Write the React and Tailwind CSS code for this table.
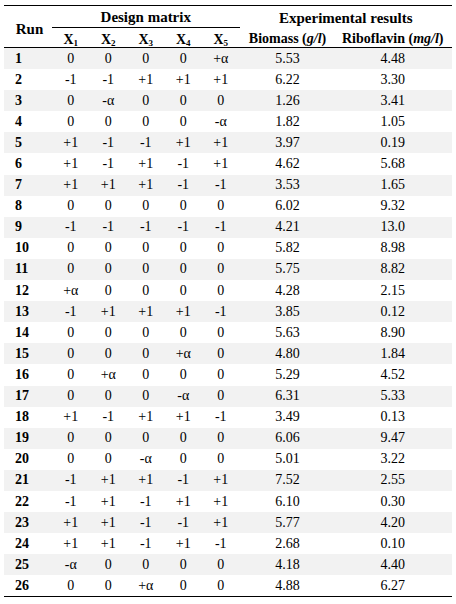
const rows = [
  ["1", "0", "0", "0", "0", "+α", "5.53", "4.48"],
  ["2", "-1", "-1", "+1", "+1", "+1", "6.22", "3.30"],
  ["3", "0", "-α", "0", "0", "0", "1.26", "3.41"],
  ["4", "0", "0", "0", "0", "-α", "1.82", "1.05"],
  ["5", "+1", "-1", "-1", "+1", "+1", "3.97", "0.19"],
  ["6", "+1", "-1", "+1", "-1", "+1", "4.62", "5.68"],
  ["7", "+1", "+1", "+1", "-1", "-1", "3.53", "1.65"],
  ["8", "0", "0", "0", "0", "0", "6.02", "9.32"],
  ["9", "-1", "-1", "-1", "-1", "-1", "4.21", "13.0"],
  ["10", "0", "0", "0", "0", "0", "5.82", "8.98"],
  ["11", "0", "0", "0", "0", "0", "5.75", "8.82"],
  ["12", "+α", "0", "0", "0", "0", "4.28", "2.15"],
  ["13", "-1", "+1", "+1", "+1", "-1", "3.85", "0.12"],
  ["14", "0", "0", "0", "0", "0", "5.63", "8.90"],
  ["15", "0", "0", "0", "+α", "0", "4.80", "1.84"],
  ["16", "0", "+α", "0", "0", "0", "5.29", "4.52"],
  ["17", "0", "0", "0", "-α", "0", "6.31", "5.33"],
  ["18", "+1", "-1", "+1", "+1", "-1", "3.49", "0.13"],
  ["19", "0", "0", "0", "0", "0", "6.06", "9.47"],
  ["20", "0", "0", "-α", "0", "0", "5.01", "3.22"],
  ["21", "-1", "+1", "+1", "-1", "+1", "7.52", "2.55"],
  ["22", "-1", "+1", "-1", "+1", "+1", "6.10", "0.30"],
  ["23", "+1", "+1", "-1", "-1", "+1", "5.77", "4.20"],
  ["24", "+1", "+1", "-1", "+1", "-1", "2.68", "0.10"],
  ["25", "-α", "0", "0", "0", "0", "4.18", "4.40"],
  ["26", "0", "0", "+α", "0", "0", "4.88", "6.27"],
]

const cols = "grid grid-cols-[48px_repeat(5,37.5px)_96px_1fr]"

const X = ({ n }) => (
  <span>
    X<sub className="text-[9px]">{n}</sub>
  </span>
)

export default function App() {
  return (
    <div className="w-[456px] h-[604px] bg-white text-black font-['Liberation_Serif',serif] text-[14px] leading-none">
      <div className="ml-[4px] w-[448px] pt-[5px]">
        <div className="border-t-[1.5px] border-black" />

        {/* header */}
        <div className={`${cols} grid-rows-[22px_19px] font-bold text-[15px]`}>
          <div className="row-span-2 flex items-center justify-center pl-[3px] pt-[6px]">Run</div>
          <div className="col-span-5 flex items-center justify-center pt-[2px] border-b border-black">Design matrix</div>
          <div className="col-span-2 flex items-center justify-center pt-[2px]">Experimental results</div>
          {[1, 2, 3, 4, 5].map((n) => (
            <div key={n} className="flex items-center justify-center pt-[4px] text-[14px]">
              <X n={n} />
            </div>
          ))}
          <div className="flex items-center justify-center whitespace-nowrap pt-[3px] text-[14px]">
            Biomass&nbsp;(<i>g/l</i>)
          </div>
          <div className="flex items-center justify-center whitespace-nowrap pt-[3px] pr-[2px] text-[14px]">
            Riboflavin&nbsp;(<i>mg/l</i>)
          </div>
        </div>

        <div className="border-t-[1.5px] border-black" />

        {/* body */}
        {rows.map((r, i) => (
          <div key={r[0]} className={`${cols} h-[21.1px] items-center ${i % 2 === 0 ? "bg-[#f2f2f2]" : ""}`}>
            <div className="pl-[11px] font-bold">{r[0]}</div>
            {r.slice(1, 6).map((v, j) => (
              <div key={j} className="text-center">{v}</div>
            ))}
            <div className="text-center">{r[6]}</div>
            <div className="text-center pr-[2px]">{r[7]}</div>
          </div>
        ))}

        <div className="border-t-[1.5px] border-black" />
      </div>
    </div>
  )
}
